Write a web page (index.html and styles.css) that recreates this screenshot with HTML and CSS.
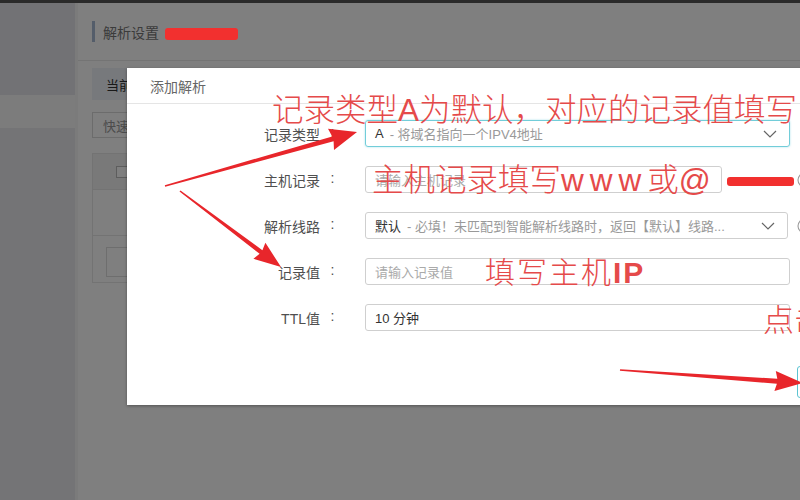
FILE: index.html
```html
<!DOCTYPE html>
<html lang="zh-CN">
<head>
<meta charset="utf-8">
<title>添加解析</title>
<link rel="stylesheet" href="styles.css">
</head>
<body>
<div class="topbar"></div>
<div class="page">
  <aside class="sidebar">
    <div class="sb-block"></div>
    <div class="sb-item"></div>
    <div class="sb-rest"></div>
  </aside>
  <main class="main">
    <header class="main-head"><span class="mark"></span><h1 class="title">解析设置</h1></header>
    <nav class="tabs"><span class="tab">当前解析</span></nav>
    <div class="search">快速搜索</div>
    <div class="table">
      <div class="thead"><span class="check"></span></div>
      <div class="trow"></div>
      <div class="tfoot"><span class="pager"></span></div>
    </div>
  </main>
</div>
<div class="mask"></div>

<section class="modal">
  <div class="modal-head">添加解析</div>
  <div class="modal-body">
    <div class="row">
      <label class="lbl"><span>记录类型</span><span class="colon">:</span></label>
      <div class="field focus"><span class="val">A</span><span class="desc">- 将域名指向一个IPV4地址</span>
        <svg class="chev" viewBox="0 0 14 8" width="14" height="8"><path d="M1 1l6 6 6-6" fill="none" stroke="#666" stroke-width="1.2"/></svg></div>
    </div>
    <div class="row">
      <label class="lbl"><span>主机记录</span><span class="colon">:</span></label>
      <div class="field short"><span class="ph">请输入主机记录</span></div>
      <span class="suffix">.xxxx.cn</span>
      <svg class="help" viewBox="0 0 16 16" width="16" height="16"><circle cx="8" cy="8" r="7" fill="none" stroke="#999" stroke-width="1.1"/><path d="M6 6.2a2 2 0 1 1 2.6 1.9c-.5.2-.6.5-.6 1v.6" fill="none" stroke="#999" stroke-width="1.1"/><circle cx="8" cy="11.6" r=".7" fill="#999"/></svg>
    </div>
    <div class="row">
      <label class="lbl"><span>解析线路</span><span class="colon">:</span></label>
      <div class="field mid"><span class="val">默认</span><span class="desc">- 必填！未匹配到智能解析线路时，返回【默认】线路...</span>
        <svg class="chev" viewBox="0 0 14 8" width="14" height="8"><path d="M1 1l6 6 6-6" fill="none" stroke="#666" stroke-width="1.2"/></svg></div>
      <svg class="help gap" viewBox="0 0 16 16" width="16" height="16"><circle cx="8" cy="8" r="7" fill="none" stroke="#999" stroke-width="1.1"/><path d="M6 6.2a2 2 0 1 1 2.6 1.9c-.5.2-.6.5-.6 1v.6" fill="none" stroke="#999" stroke-width="1.1"/><circle cx="8" cy="11.6" r=".7" fill="#999"/></svg>
    </div>
    <div class="row">
      <label class="lbl"><span>记录值</span><span class="colon">:</span></label>
      <div class="field"><span class="ph">请输入记录值</span></div>
    </div>
    <div class="row">
      <label class="lbl"><span>TTL值</span><span class="colon">:</span></label>
      <div class="field"><span class="val">10 分钟</span></div>
    </div>
  </div>
  <div class="modal-foot">
    <button class="btn primary">确定</button>
    <button class="btn">取消</button>
  </div>
</section>

<div class="marks">
  <span class="redact r1"></span>
  <span class="redact r2"></span>
  <span class="note n1">记录类型<span class="lat">A</span>为默认，对应的记录值填写</span>
  <span class="note n2">主机记录填写<span class="lat www">www</span>或<span class="lat">@</span></span>
  <span class="note n3">填写主机<span class="lat b">IP</span></span>
  <span class="note n4">点击确定</span>
  <svg class="arrows" viewBox="0 0 800 500" width="800" height="500">
    <polygon fill="#e8262b" points="165.2,186.8 333.6,141.2 334.0,149.9 357,132 328.0,128.7 332.2,136.4 164.8,185.2"/>
    <polygon fill="#e8262b" points="179.5,191.6 259.6,253.8 253.4,258.8 281,267 265.4,242.8 262.4,250.2 180.5,190.4"/>
    <polygon fill="#e8262b" points="619.9,370.8 776.9,383.7 774.4,391.1 803,383 775.8,371.1 777.3,378.7 620.1,369.2"/>
  </svg>
</div>
</body>
</html>
```

FILE: styles.css
```css
* { box-sizing: border-box; }
html, body { margin: 0; padding: 0; }
body {
  width: 800px;
  height: 500px;
  overflow: hidden;
  position: relative;
  background: #fff;
  font-family: "Liberation Sans", "Noto Sans CJK SC", sans-serif;
  font-size: 13px;
  color: #333;
}

.topbar { height: 3px; background: #555; }
.page { display: flex; height: 497px; }

.sidebar {
  width: 78px;
  display: flex;
  flex-direction: column;
  border-right: 3px solid #f6f6f6;
  background: #e8e9ed;
}
.sb-block { height: 92px; background: #e4e5ea; }
.sb-item { height: 33px; background: #f9f9f9; }
.sb-rest { flex: 1; background: #e8e9ed; }

.main { flex: 1; padding-left: 14px; background: #fff; }
.main-head {
  height: 58px;
  margin-left: -14px;
  padding-left: 14px;
  border-bottom: 1px solid #e8e8e8;
  display: flex;
  align-items: center;
}
.mark { width: 3px; height: 21px; background: #a9bad4; margin-right: 8px; }
.title { margin: 0; font-size: 14px; font-weight: normal; color: #777; }

.tabs { margin-top: 7px; height: 32px; display: flex; }
.tab {
  display: flex;
  align-items: center;
  padding: 0 14px;
  background: #eef2f9;
  color: #333;
  font-size: 13px;
}
.search {
  margin-top: 12px;
  width: 220px;
  height: 26px;
  border: 1px solid #d8d8d8;
  padding-left: 10px;
  display: flex;
  align-items: center;
  color: #999;
}
.table { margin-top: 15px; width: 700px; border: 1px solid #e6e6e6; }
.thead { height: 35px; background: #f3f3f3; display: flex; align-items: center; padding-left: 23px; }
.check { width: 12px; height: 12px; border: 1px solid #bbb; background: #fff; }
.trow { height: 46px; border-top: 1px solid #e6e6e6; }
.tfoot { height: 47px; border-top: 1px solid #e6e6e6; padding: 11px 0 0 13px; }
.pager { display: block; width: 40px; height: 30px; border: 1px solid #ddd; }

.mask { position: absolute; inset: 0; background: rgba(0, 0, 0, 0.5); }

.modal {
  position: absolute;
  left: 127px;
  top: 68px;
  width: 840px;
  height: 337px;
  background: #fff;
  box-shadow: 0 1px 3px rgba(0, 0, 0, 0.35);
}
.modal-head {
  height: 36px;
  border-bottom: 1px solid #e5e5e5;
  padding-left: 23px;
  display: flex;
  align-items: center;
  font-size: 14px;
  color: #666;
}
.modal-body { padding-top: 16px; display: flex; flex-direction: column; gap: 19px; }
.row { display: flex; align-items: center; height: 27px; }
.lbl {
  width: 218px;
  display: flex;
  justify-content: flex-end;
  font-size: 14px;
  color: #4f4f4f;
}
.colon { width: 25px; text-align: center; }
.field {
  margin-left: 20px;
  width: 425px;
  height: 27px;
  border: 1px solid #cfcfcf;
  border-radius: 3px;
  padding: 0 12px 0 9px;
  display: flex;
  align-items: center;
  white-space: nowrap;
  overflow: hidden;
}
.field.focus { border-color: #72cdd9; box-shadow: 0 0 2px rgba(90, 200, 215, 0.6); }
.field.short { width: 357px; }
.field.mid { width: 423px; }
.val { color: #333; font-size: 13px; }
.desc { color: #999; font-size: 13px; margin-left: 6px; }
.ph { color: #aaa; font-size: 13px; }
.chev { margin-left: auto; }
.suffix { width: 75px; padding-left: 8px; color: #666; font-size: 13px; white-space: nowrap; overflow: hidden; }
.help { flex: none; }
.help.gap { margin-left: 9px; }

.modal-foot { margin-top: 35px; display: flex; justify-content: flex-end; gap: 10px; padding-right: 20px; }
.btn {
  width: 70px;
  height: 32px;
  border: 1px solid #ccc;
  border-radius: 3px;
  background: #fff;
  font-family: inherit;
  font-size: 13px;
  color: #333;
}
.btn.primary { border-color: #5cc4d2; background: #fff; }

.marks { position: absolute; inset: 0; pointer-events: none; }
.arrows { position: absolute; left: 0; top: 0; }
.redact { position: absolute; background: #f2302f; border-radius: 3px; }
.r1 { left: 165px; top: 28px; width: 73px; height: 12px; }
.r2 { left: 727px; top: 177px; width: 67px; height: 9px; }

.note {
  position: absolute;
  white-space: nowrap;
  color: #e54a4a;
  font-family: "Noto Sans CJK SC", sans-serif;
  font-weight: 300;
  line-height: 1;
}
.lat { font-family: "Liberation Sans", sans-serif; }
.lat.www { letter-spacing: 6px; }
.lat.b { font-weight: bold; }
.n1 { left: 272px; top: 92px; font-size: 31.5px; }
.n2 { left: 372px; top: 162px; font-size: 31.5px; }
.n3 { left: 485px; top: 255px; font-size: 30px; letter-spacing: 2px; }
.n4 { left: 763px; top: 302px; font-size: 31px; }
```
